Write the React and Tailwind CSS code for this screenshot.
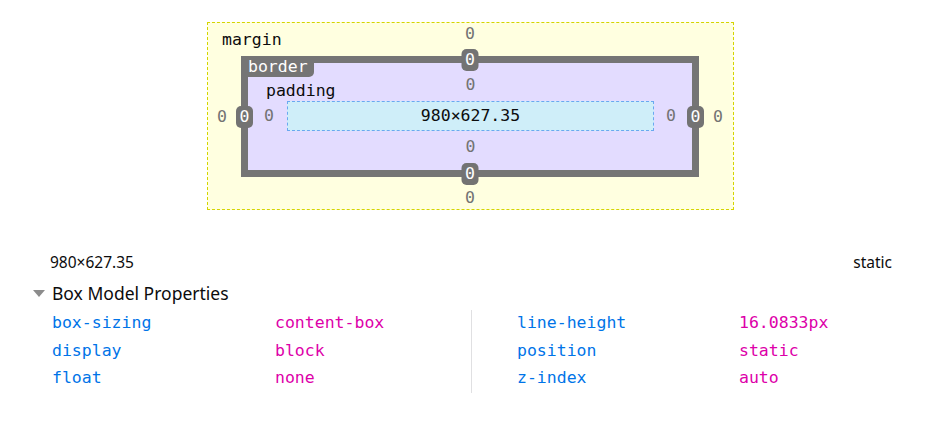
import React from 'react';

const mono = { fontFamily: '"DejaVu Sans Mono", monospace' };

const Zero = ({ className = '' }) => (
  <div className={`flex text-[16.5px] leading-[20px] text-[#737373] ${className}`}>
    <span>0</span>
  </div>
);

const Badge = ({ className }) => (
  <span
    className={`absolute flex h-[22px] w-[17px] items-center justify-center rounded-[5px] bg-[#737373] text-[16.5px] leading-[20px] text-white ${className}`}
  >
    0
  </span>
);

const props = [
  ['box-sizing', 'content-box', 'line-height', '16.0833px'],
  ['display', 'block', 'position', 'static'],
  ['float', 'none', 'z-index', 'auto'],
];

const PropRows = ({ rows }) =>
  rows.map(([n, v]) => (
    <React.Fragment key={n}>
      <span className="flex h-[27.5px] items-center text-[#0074e8]">{n}</span>
      <span className="flex h-[27.5px] items-center text-[#dd00a9]">{v}</span>
    </React.Fragment>
  ));

export default function App() {
  return (
    <div className="min-h-screen bg-white text-[#0c0c0d]">
      <div className="pt-[22px] pl-[207px]" style={mono}>
        {/* margin */}
        <div className="relative box-border grid h-[188px] w-[527px] grid-cols-[33px_1fr_34px] grid-rows-[33px_1fr_32px] border border-dashed border-[#d4d400] bg-[#ffffe0]">
          <span className="absolute left-[14px] top-[7px] text-[16.5px] leading-[20px]">margin</span>
          <div />
          <Zero className="justify-center pt-[1px]" />
          <div />
          <Zero className="items-center pl-[9px]" />

          {/* border */}
          <div className="relative box-border grid border-[7px] border-[#757575] bg-[#e3dcff] grid-cols-[39px_1fr_38px] grid-rows-[38px_1fr_39px]">
            <span className="absolute -left-[7px] -top-[7px] h-[21px] rounded-br-[5px] bg-[#757575] pl-[7px] pr-[6px] text-[16.5px] leading-[21px] text-white">
              border
            </span>
            <Badge className="left-1/2 -top-[14.5px] -translate-x-1/2" />
            <Badge className="left-1/2 -bottom-[14.5px] -translate-x-1/2" />
            <Badge className="-left-[12px] top-1/2 -translate-y-1/2" />
            <Badge className="-right-[12px] top-1/2 -translate-y-1/2" />

            <div className="pl-[18px] pt-[18px] text-[16.5px] leading-[20px] col-span-3 row-start-1 col-start-1">
              padding
            </div>
            <Zero className="col-start-2 row-start-1 justify-center pt-[12px]" />
            <Zero className="col-start-1 row-start-2 items-center pl-[16px]" />

            {/* content */}
            <div className="col-start-2 row-start-2 flex h-[30px] items-center justify-center border border-dashed border-[#6aa8f0] bg-[#cfeef9] text-[16.5px] leading-[20px]">
              980×627.35
            </div>

            <Zero className="col-start-3 row-start-2 items-center justify-end pr-[16px]" />
            <Zero className="col-start-2 row-start-3 justify-center pt-[6px]" />
          </div>

          <Zero className="items-center justify-end pr-[10px]" />
          <div />
          <Zero className="items-end justify-center pb-[1px]" />
        </div>
      </div>

      <div style={{ fontFamily: '"Noto Sans", sans-serif' }}>
        <div className="mt-[43px] flex h-[20px] items-center justify-between pl-[50px] pr-[35px] text-[15.5px]">
          <span>980×627.35</span>
          <span>static</span>
        </div>
        <div className="mt-[9px] flex h-[22px] items-center pl-[33px] text-[17.5px]">
          <span className="mr-[7px] h-0 w-0 border-x-[6px] border-t-[7px] border-x-transparent border-t-[#8c8c8c]" />
          <span>Box Model Properties</span>
        </div>
      </div>

      <div className="mt-[6px] flex text-[16.5px]" style={mono}>
        <div className="grid w-[471px] grid-cols-[223px_1fr] pl-[52px]">
          <PropRows rows={props.map((r) => [r[0], r[1]])} />
        </div>
        <div className="grid flex-1 grid-cols-[222px_1fr] border-l border-[#e0e0e2] pl-[45px]">
          <PropRows rows={props.map((r) => [r[2], r[3]])} />
        </div>
      </div>
    </div>
  );
}
